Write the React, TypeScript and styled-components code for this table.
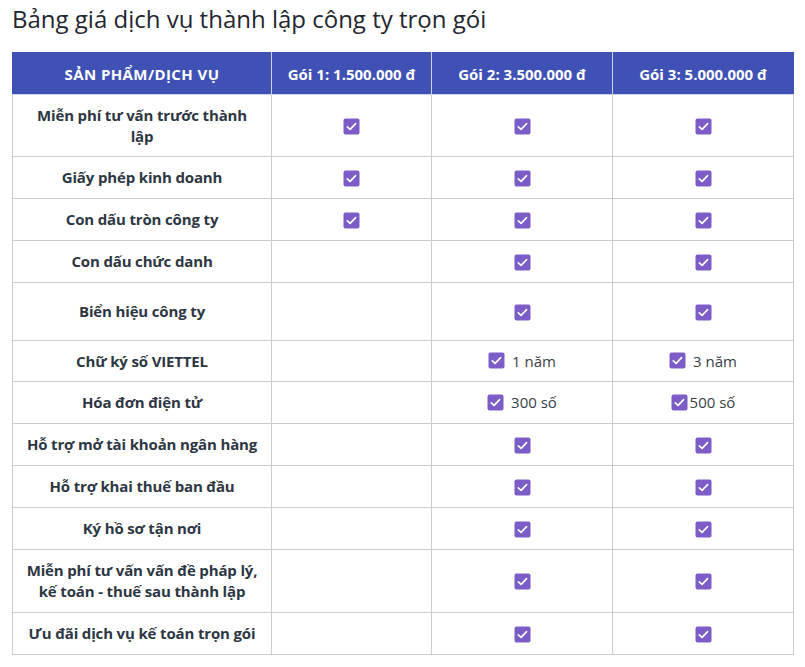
import styled, { createGlobalStyle } from "styled-components";

const GlobalStyle = createGlobalStyle`
  body {
    margin: 0;
    background: #fff;
    font-family: "Open Sans", "Noto Sans", Arial, sans-serif;
    color: #2d3643;
  }
`;

const Page = styled.div`
  padding: 3px 13px 12px 12px;
`;

const Title = styled.h2`
  margin: 0 0 18px;
  font-size: 24px;
  font-weight: 400;
  line-height: 31px;
  color: #1f2630;
`;

const Table = styled.table`
  width: 781px;
  border-collapse: collapse;
  table-layout: fixed;
  font-size: 15px;
`;

const Col = styled.col<{ w: number }>`
  width: ${(p) => p.w}px;
`;

const HeadCell = styled.th`
  height: 41px;
  padding: 0 6px;
  background: #3f51b5;
  color: #fff;
  font-weight: 700;
  font-size: 15px;
  text-align: center;
  white-space: nowrap;
  border: 1px solid #cfd3e8;
  border-top-color: #3f51b5;
  &:first-child {
    border-left-color: #3f51b5;
    letter-spacing: 0.4px;
  }
  &:last-child {
    border-right-color: #3f51b5;
  }
`;

const Row = styled.tr<{ h: number }>`
  height: ${(p) => p.h}px;
`;

const NameCell = styled.td`
  padding: 4px 4px;
  text-align: center;
  font-weight: 700;
  line-height: 21px;
  letter-spacing: -0.15px;
  border: 1px solid #cccccc;
`;

const MarkCell = styled.td`
  text-align: center;
  border: 1px solid #cccccc;
  font-size: 15px;
  color: #3a3f47;
`;

const Mark = styled.span<{ gap: number }>`
  display: inline-flex;
  align-items: center;
  gap: ${(p) => p.gap}px;
  vertical-align: middle;
  position: relative;
  top: -1px;
`;

const Check = () => (
  <svg width="17" height="17" viewBox="0 0 17 17">
    <rect x="0.5" y="0.5" width="16" height="16" rx="2" fill="#7c5cc6" />
    <path
      d="M4.3 8.8 L7.1 11.4 L12.6 5.6"
      fill="none"
      stroke="#fff"
      strokeWidth="1.6"
      strokeLinecap="round"
      strokeLinejoin="round"
    />
  </svg>
);

type Val = boolean | string;

interface Item {
  name: string[];
  h: number;
  cols: [Val, Val, Val];
}

const items: Item[] = [
  { name: ["Miễn phí tư vấn trước thành", "lập"], h: 62, cols: [true, true, true] },
  { name: ["Giấy phép kinh doanh"], h: 42, cols: [true, true, true] },
  { name: ["Con dấu tròn công ty"], h: 42, cols: [true, true, true] },
  { name: ["Con dấu chức danh"], h: 42, cols: [false, true, true] },
  { name: ["Biển hiệu công ty"], h: 58, cols: [false, true, true] },
  { name: ["Chữ ký số VIETTEL"], h: 41, cols: [false, "1 năm", "3 năm"] },
  { name: ["Hóa đơn điện tử"], h: 42, cols: [false, "300 số", "500 số"] },
  { name: ["Hỗ trợ mở tài khoản ngân hàng"], h: 42, cols: [false, true, true] },
  { name: ["Hỗ trợ khai thuế ban đầu"], h: 42, cols: [false, true, true] },
  { name: ["Ký hồ sơ tận nơi"], h: 42, cols: [false, true, true] },
  {
    name: ["Miễn phí tư vấn vấn đề pháp lý,", "kế toán - thuế sau thành lập"],
    h: 63,
    cols: [false, true, true],
  },
  { name: ["Ưu đãi dịch vụ kế toán trọn gói"], h: 42, cols: [false, true, true] },
];

const Cell = ({ v, tight }: { v: Val; tight: boolean }) => {
  if (v === false) return <MarkCell />;
  if (v === true)
    return (
      <MarkCell>
        <Mark gap={0}>
          <Check />
        </Mark>
      </MarkCell>
    );
  return (
    <MarkCell>
      <Mark gap={tight ? 2 : 7}>
        <Check />
        {v}
      </Mark>
    </MarkCell>
  );
};

const App = () => (
  <Page>
    <GlobalStyle />
    <Title>Bảng giá dịch vụ thành lập công ty trọn gói</Title>
    <Table>
      <colgroup>
        <Col w={259} />
        <Col w={160} />
        <Col w={181} />
        <Col w={181} />
      </colgroup>
      <thead>
        <tr>
          <HeadCell>SẢN PHẨM/DỊCH VỤ</HeadCell>
          <HeadCell>Gói 1: 1.500.000 đ</HeadCell>
          <HeadCell>Gói 2: 3.500.000 đ</HeadCell>
          <HeadCell>Gói 3: 5.000.000 đ</HeadCell>
        </tr>
      </thead>
      <tbody>
        {items.map((it) => (
          <Row key={it.name.join(" ")} h={it.h}>
            <NameCell>
              {it.name.map((line, i) => (
                <span key={i}>
                  {i > 0 && <br />}
                  {line}
                </span>
              ))}
            </NameCell>
            {it.cols.map((v, i) => (
              <Cell key={i} v={v} tight={i === 2 && v === "500 số"} />
            ))}
          </Row>
        ))}
      </tbody>
    </Table>
  </Page>
);

export default App;
